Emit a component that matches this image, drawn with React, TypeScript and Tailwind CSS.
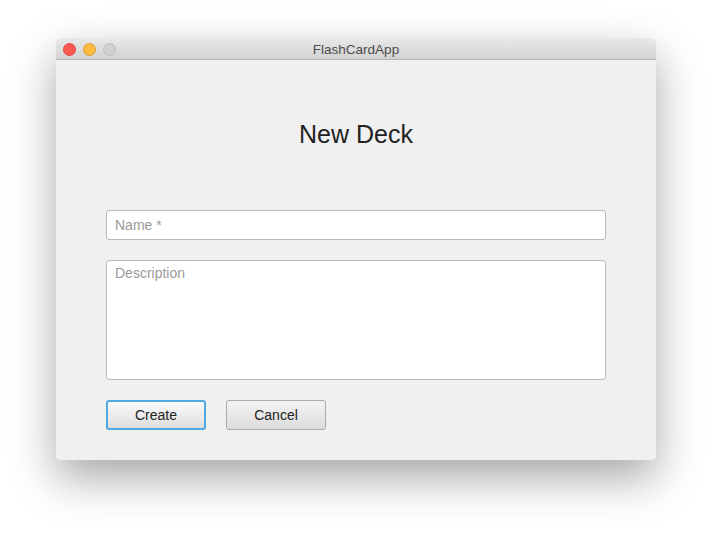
import React from 'react';

const font = { fontFamily: '"Liberation Sans", Arial, sans-serif' };

const App: React.FC = () => {
  return (
    <div className="min-h-screen w-full bg-white pt-[38px]" style={font}>
      <div className="mx-auto w-[600px] rounded-[5px] shadow-[0_18px_45px_rgba(0,0,0,0.35)] overflow-hidden">
        {/* Title bar */}
        <div className="relative h-[22px] bg-gradient-to-b from-[#e9e9e9] to-[#d2d2d2] border-b border-[#b4b4b4] flex items-center justify-center">
          <div className="absolute left-[7px] top-[5px] flex gap-[7px]">
            <span className="w-[13px] h-[13px] rounded-full bg-[#fc5753] border border-[#df4744]"></span>
            <span className="w-[13px] h-[13px] rounded-full bg-[#fdbc40] border border-[#de9f34]"></span>
            <span className="w-[13px] h-[13px] rounded-full bg-[#d0d0d0] border border-[#bdbdbd]"></span>
          </div>
          <span className="pt-[3px] text-[13.5px] text-[#4c4c4c]">FlashCardApp</span>
        </div>

        {/* Content */}
        <div className="bg-[#f0f0f0] h-[400px] px-[50px] flex flex-col">
          <div className="h-[150px] flex items-center justify-center">
            <h1 className="text-[25px] text-[#222]">New Deck</h1>
          </div>

          <input
            placeholder="Name *"
            className="h-[30px] w-full bg-white border border-[#b8b8b8] rounded-[3px] px-[8px] text-[14px] text-[#333] placeholder:text-[#9a9a9a] outline-none"
          />

          <textarea
            placeholder="Description"
            className="mt-[20px] h-[120px] w-full resize-none bg-white border border-[#b8b8b8] rounded-[3px] px-[8px] py-[2px] text-[14px] text-[#333] placeholder:text-[#9a9a9a] outline-none"
          />

          <div className="mt-[20px] flex gap-[20px]">
            <button className="w-[100px] h-[30px] rounded-[3px] border-2 border-[#4ea9dc] bg-gradient-to-b from-[#fafafa] to-[#dedede] text-[14px] text-[#222]">
              Create
            </button>
            <button className="w-[100px] h-[30px] rounded-[3px] border border-[#ababab] bg-gradient-to-b from-[#f4f4f4] to-[#dcdcdc] text-[14px] text-[#222]">
              Cancel
            </button>
          </div>
        </div>
      </div>
    </div>
  );
};

export default App;
